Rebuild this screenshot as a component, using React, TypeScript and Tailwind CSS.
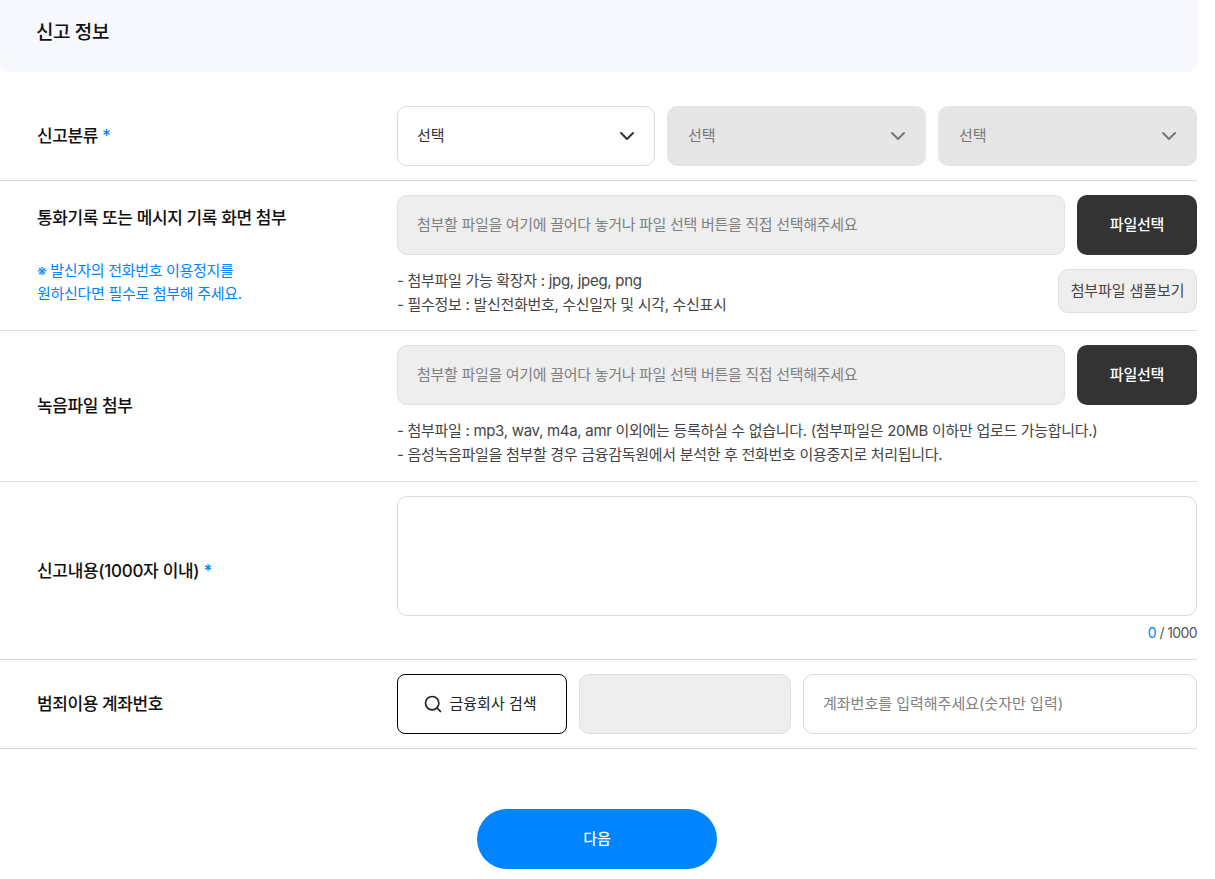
import { ChevronDown, Search } from 'lucide-react';

const font = "font-['Inter','Noto_Sans_CJK_KR',sans-serif]";

function SelectBox({ disabled, first }: { disabled?: boolean; first?: boolean }) {
  let box = 'flex h-[60px] flex-1 items-center justify-between rounded-[10px] bg-[#e6e6e6] pl-[21px] pr-[16px] text-[#777]';
  if (!disabled) box = 'flex h-[60px] items-center justify-between rounded-[10px] border border-[#dcdcdc] bg-white pl-[19px] pr-[15px] text-[#333]';
  return (
    <div className={first ? `${box} w-[258px]` : box}>
      <span className="text-[15px] tracking-[-0.1px]">선택</span>
      <ChevronDown className="h-6 w-6" strokeWidth={2} />
    </div>
  );
}

function FileRow() {
  return (
    <div className="flex gap-3">
      <div className="flex h-[60px] flex-1 items-center rounded-[10px] border border-[#e0e0e0] bg-[#eeeeee] px-[19px] text-[15px] tracking-[-0.3px] text-[#808080]">
        첨부할 파일을 여기에 끌어다 놓거나 파일 선택 버튼을 직접 선택해주세요
      </div>
      <button className="h-[60px] w-[120px] rounded-[10px] bg-[#333333] text-[15px] font-medium tracking-[-0.2px] text-white">
        파일선택
      </button>
    </div>
  );
}

export default function App() {
  return (
    <div className={`${font} w-[1197px] bg-white text-[#111]`}>
      <div className="flex h-[72px] items-center rounded-b-[10px] bg-[#f7f8fd] pb-[5px] pl-[36px] text-[19px] font-medium tracking-[-0.4px]">
        신고 정보
      </div>

      <div className="mt-5 flex h-[89px] border-b border-[#dcdcdc] pt-[14px]">
        <div className="flex h-[60px] w-[397px] items-center pt-[2px] pl-[37px] text-[17px] font-medium tracking-[-0.4px]">
          신고분류&nbsp;<span className="text-[#0085ff]">*</span>
        </div>
        <div className="flex flex-1 gap-3">
          <SelectBox first />
          <SelectBox disabled />
          <SelectBox disabled />
        </div>
      </div>

      <div className="flex h-[150px] border-b border-[#dcdcdc] pt-[14px]">
        <div className="w-[397px] pl-[37px]">
          <div className="mt-[11px] text-[17px] font-medium leading-[24px] tracking-[-0.4px]">
            통화기록 또는 메시지 기록 화면 첨부
          </div>
          <div className="mt-[29px] text-[15px] leading-[23px] tracking-[-0.3px] text-[#0085ff]">
            ※ 발신자의 전화번호 이용정지를
            <br />
            원하신다면 필수로 첨부해 주세요.
          </div>
        </div>
        <div className="flex-1">
          <FileRow />
          <div className="mt-[14px] flex items-end justify-between">
            <div className="text-[15px] leading-[24px] tracking-[-0.3px] text-[#444]">
              <div>- 첨부파일 가능 확장자 : jpg, jpeg, png</div>
              <div>- 필수정보 : 발신전화번호, 수신일자 및 시각, 수신표시</div>
            </div>
            <button className="mb-[4px] h-11 w-[139px] rounded-[10px] border border-[#e0e0e0] bg-[#eeeeee] text-[15px] tracking-[-0.1px] text-[#444]">
              첨부파일 샘플보기
            </button>
          </div>
        </div>
      </div>

      <div className="flex h-[151px] border-b border-[#dcdcdc] pt-[14px]">
        <div className="flex w-[397px] items-center pb-[12px] pl-[37px] text-[17px] font-medium tracking-[-0.4px]">
          녹음파일 첨부
        </div>
        <div className="flex-1">
          <FileRow />
          <div className="mt-[14px] text-[15px] leading-[24px] tracking-[-0.3px] text-[#444]">
            <div>- 첨부파일 : mp3, wav, m4a, amr 이외에는 등록하실 수 없습니다. (첨부파일은 20MB 이하만 업로드 가능합니다.)</div>
            <div>- 음성녹음파일을 첨부할 경우 금융감독원에서 분석한 후 전화번호 이용중지로 처리됩니다.</div>
          </div>
        </div>
      </div>

      <div className="flex h-[178px] border-b border-[#dcdcdc] pt-[14px]">
        <div className="flex w-[397px] items-center pb-[12px] pl-[37px] text-[17px] font-medium tracking-[-0.3px]">
          신고내용(1000자 이내)&nbsp;<span className="text-[#0085ff]">*</span>
        </div>
        <div className="flex-1">
          <div className="h-[120px] rounded-[10px] border border-[#dcdcdc] bg-white" />
          <div className="mt-[7px] text-right text-[14px] leading-[20px] tracking-[-0.6px] text-[#555]">
            <span className="text-[#0085ff]">0</span> / 1000
          </div>
        </div>
      </div>

      <div className="flex h-[89px] border-b border-[#dcdcdc] pt-[14px]">
        <div className="flex h-[60px] w-[397px] items-center pt-[2px] pl-[37px] text-[17px] font-medium tracking-[-0.4px]">
          범죄이용 계좌번호
        </div>
        <div className="flex flex-1 gap-3">
          <button className="flex h-[60px] w-[170px] items-center justify-center gap-[6px] rounded-[8px] border border-black bg-white pr-[4px] text-[15px] text-[#222]">
            <Search className="h-5 w-5" strokeWidth={2} />
            금융회사 검색
          </button>
          <div className="h-[60px] w-[212px] rounded-[10px] border border-[#e0e0e0] bg-[#eeeeee]" />
          <div className="flex h-[60px] flex-1 items-center rounded-[10px] border border-[#dcdcdc] bg-white px-[19px] text-[15px] text-[#808080]">
            계좌번호를 입력해주세요(숫자만 입력)
          </div>
        </div>
      </div>

      <div className="flex justify-center pt-[60px] pb-[10px] pr-[3px]">
        <button className="h-[60px] w-[240px] rounded-[30px] bg-[#0085ff] text-[15px] font-medium text-white">
          다음
        </button>
      </div>
    </div>
  );
}
